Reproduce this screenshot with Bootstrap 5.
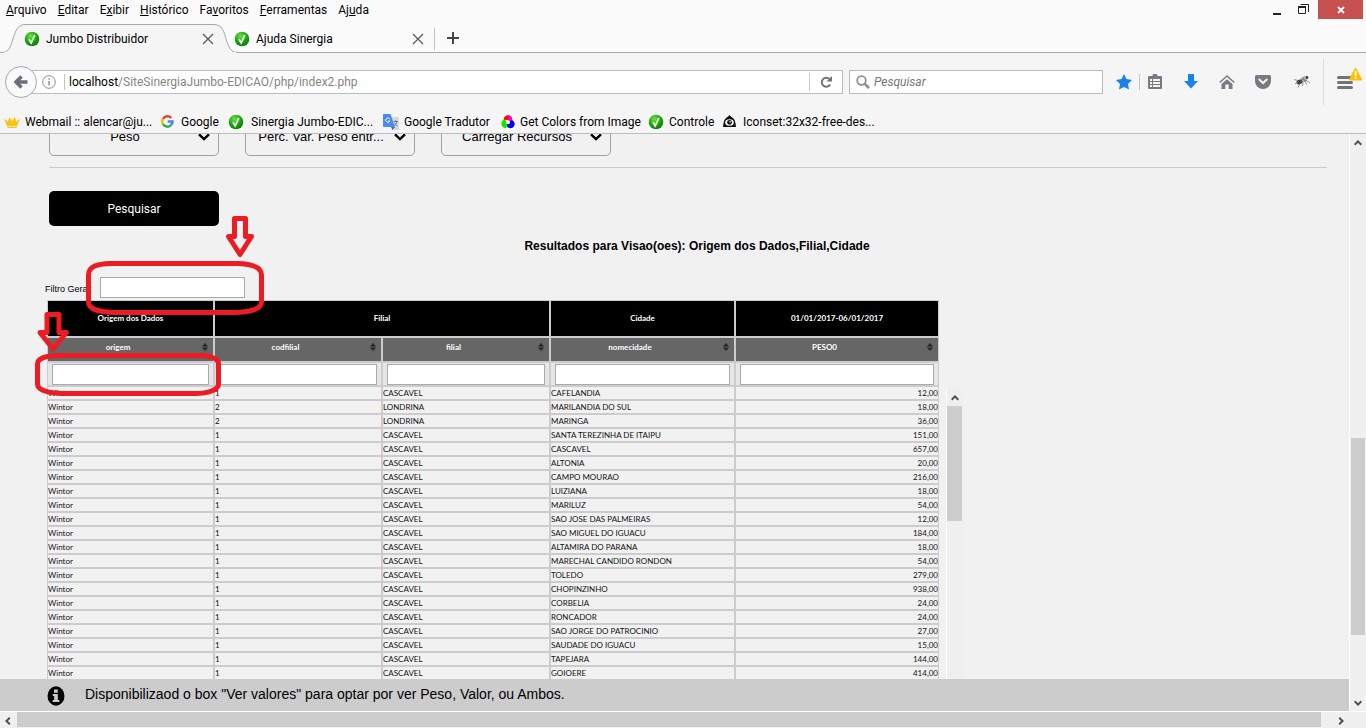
<!DOCTYPE html>
<html lang="pt-BR">
<head>
<meta charset="utf-8">
<meta name="viewport" content="width=device-width, initial-scale=1">
<title>Jumbo Distribuidor</title>
<link rel="stylesheet" href="https://cdn.jsdelivr.net/npm/bootstrap@5.3.0/dist/css/bootstrap.min.css">
<style>
  :root { --ui: Roboto, "Open Sans", sans-serif; --page: "Liberation Sans", Arial, sans-serif; --grid: Lato, "Open Sans", sans-serif; }
  body { font: 12px/16px var(--ui); color: #000; background: #f1f1f1; }
  a { color: inherit; text-decoration: none; }
  svg { display: block; flex: none; }
  button { font: inherit; color: inherit; border: 0; background: none; padding: 0; }

  .menubar { height: 23px; background: #fbfbfb; }
  .menubar nav { gap: 11px; padding: 2px 6px; }
  .win-btn { width: 26px; height: 19px; display: grid; place-items: center; }
  .win-close { width: 45px; margin: 0 3px 0 2px; background: #c75050; }

  .tabstrip { height: 30px; background: #fbfbfb; border-bottom: 1px solid #a0a8b2; }
  .tab-item { height: 31px; }
  .tab-one { width: 234px; padding: 0 20px 0 24px; }
  .tab-two { width: 201px; padding: 0 10px 0 0; border-right: 1px solid #c4c4c4; height: 22px; margin-top: 5px; }
  .tab-shape { left: 0; top: 0; }
  .tab-item span { flex: 1; margin-left: 6px; }

  .toolbar { height: 57px; background: #f5f5f5; padding-left: 5px; }
  .field { height: 24px; background: #fff; border: 1px solid #b4bcc6; }
  .field input { font: inherit; border: 0; outline: 0; background: none; min-width: 0; }
  .back-btn { width: 32px; height: 32px; border: 1px solid #a3aab3; border-radius: 50%; background: #fafafa; display: grid; place-items: center; z-index: 1; }
  .url-field { margin-left: -16px; padding-left: 20px; margin-right: 6px; }
  .url-path { color: #858585; }
  .reload { width: 33px; height: 18px; border-left: 1px solid #ccc; display: grid; place-items: center; }
  .search-field { width: 254px; padding-left: 6px; margin-right: 13px; }
  .search-field input::placeholder { color: #757575; font-style: italic; opacity: 1; }
  .vline { width: 1px; height: 16px; background: #c4c4c4; }
  .tool-btn { width: 36px; height: 24px; display: grid; place-items: center; }
  .star-btn { width: 16px; margin-right: 7px; }
  .tool-btn.narrow { width: 30px; margin-right: 3px; }
  .tool-btn.wide { width: 42px; }
  .menu-btn { width: 43px; height: 46px; border-left: 1px solid #dadada; padding-left: 13px; }
  .bookmarks { height: 24px; background: #f5f5f5; border-bottom: 1px solid #bcbcbc; padding-left: 4px; display: grid; grid-template-columns: 157px 67px 155px 118px 147px 75px auto; align-items: center; }
  .bookmarks a { display: flex; align-items: center; gap: 5px; white-space: nowrap; }
  .bookmarks a.wide-gap { gap: 7px; }

  .view { font-family: var(--page); padding: 0 22px 0 45px; overflow: hidden; min-height: 0; }
  .combos { margin-top: -14px; padding-left: 4px; gap: 26px; }
  .combo { width: 170px; height: 36px; border: 1px solid #9aa0a3; border-radius: 5px; background: #f1f1f1; overflow: hidden; }
  .combo select { appearance: none; width: 100%; height: 32px; border: 0; outline: 0; background: none; font: 13px/16px var(--page); color: #000; text-align: center; padding: 0 24px 0 6px; }
  .combo svg { right: 8px; top: 12px; pointer-events: none; }
  .rule { height: 1px; margin: 11px 0 23px 4px; border: 0; background: #ccc; opacity: 1; }
  .search-btn { width: 170px; height: 35px; margin-left: 4px; border-radius: 5px; background: #000; color: #fff; font: 12px/16px var(--ui); }
  .result-title { font: bold 12px/18px var(--page); margin: 11px -22px 22px 0; }
  .box-in { display: block; height: 21px; border: 1px solid #a9a9b0; border-radius: 0; background: #fff; padding: 0 4px; font: 10px/16px var(--page); }
  .general { font-size: 9px; gap: 7px; margin-bottom: 2px; }
  .general label { width: 48px; white-space: nowrap; padding-top: 2px; }
  .general .box-in { width: 145px; }

  .grid-table { width: 892px; table-layout: fixed; border-collapse: separate; border-spacing: 0; margin-left: 2px; font: 8px/12px var(--grid); flex: none; color: #111; }
  .grid-table th, .grid-table td { border: 1px solid #ccc; padding: 0; white-space: nowrap; overflow: hidden; }
  .grid-table th { color: #fff; text-align: center; font-weight: 700; }
  .row-top th { height: 37px; background: #000; padding-bottom: 2px; }
  .row-sub th { height: 25px; background: #666; padding-bottom: 5px; }
  .row-filter td { height: 24px; background: #e6e6e6; padding: 0 4px; }
  .row-filter .box-in { width: 100%; }
  .sort { width: 100%; display: flex; align-items: center; padding-right: 5px; font-weight: 700; }
  .sort span { flex: 1; padding-right: 14px; }
  .grid-table tbody td:last-child { text-align: right; }
  .inner-bar { width: 17px; margin: 89px 0 0 7px; border-left: 1px solid #fff; background: #efefef; }
  .inner-bar i { display: block; height: 115px; background: #cdcdcd; margin-right: 1px; }
  .sb-btn { width: 16px; height: 17px; display: grid; place-items: center; }
  .marks { left: 30px; top: 76px; pointer-events: none; }

  .notice { height: 32px; background: #ccc; font: 14px/18px var(--page); padding: 0 47px 2px; gap: 20px; }
  .notice svg { margin-top: 4px; }
  .vbar { width: 17px; background: #f0f0f0; border-left: 1px solid #fff; }
  .vbar i, .hbar i { background: #cdcdcd; }
  .vbar i { margin: 0 1px; }
  .hbar { height: 17px; background: #f0f0f0; border-top: 1px solid #fff; padding-right: 17px; }
  .hbar i { margin: 0 0 1px 1px; }
</style>
</head>
<body class="vh-100 d-flex flex-column overflow-hidden">
<svg width="0" height="0" class="position-absolute" aria-hidden="true">
  <defs>
    <radialGradient id="gr" cx=".4" cy=".3" r=".8"><stop offset="0" stop-color="#6fe04a"/><stop offset=".55" stop-color="#17a30c"/><stop offset="1" stop-color="#0a6d05"/></radialGradient>
    <symbol id="ok" viewBox="0 0 16 16"><path fill="#fff" d="M0 0h16v16H0z"/><circle cx="8" cy="8" r="7.3" fill="url(#gr)"/><path d="M5 8.3 7.2 12 10.8 4" fill="none" stroke="#fff" stroke-width="1.7"/></symbol>
    <symbol id="x" viewBox="0 0 12 12"><path d="M1 1l10 10M11 1L1 11" fill="none" stroke="#5a5a5a" stroke-width="1.3"/></symbol>
    <symbol id="up" viewBox="0 0 8 6"><path d="M.7 4.8 4 1.4l3.300 3.400" fill="none" stroke="#505050" stroke-width="2"/></symbol>
    <symbol id="chev" viewBox="0 0 12 8"><path d="M1 1.300 6 6l5-4.700" fill="none" stroke="#000" stroke-width="2.400"/></symbol>
    <symbol id="so" viewBox="0 0 6 8"><path d="M3 0l3 3.500H0zM3 8L0 4.500h6z" fill="#1f2a2e"/></symbol>
  </defs>
</svg>

<header>
  <div class="menubar d-flex justify-content-between align-items-start">
    <nav class="d-flex" aria-label="Menu">
      <a href="#"><u>A</u>rquivo</a><a href="#"><u>E</u>ditar</a><a href="#">E<u>x</u>ibir</a><a href="#"><u>H</u>istórico</a><a href="#">Fa<u>v</u>oritos</a><a href="#"><u>F</u>erramentas</a><a href="#">Aj<u>u</u>da</a>
    </nav>
    <div class="d-flex">
      <button class="win-btn" aria-label="Minimizar"><svg width="10" height="12"><path d="M1 9h8v2H1z" fill="#222"/></svg></button>
      <button class="win-btn" aria-label="Restaurar"><svg width="11" height="11"><path d="M2.500 .5h8V8M.5 3.500h7v6h-7z" fill="none" stroke="#222"/><path d="M0 2h8v2H0z" fill="#222"/></svg></button>
      <button class="win-btn win-close" aria-label="Fechar"><svg width="8" height="8"><path d="M1 1l6 6M7 1L1 7" stroke="#fff" stroke-width="1.800"/></svg></button>
    </div>
  </div>

  <div class="tabstrip d-flex position-relative">
    <svg class="tab-shape position-absolute" width="240" height="30"><path d="M0 29.500h2C16 29.500 10 1.500 25 1.500H214C230 1.500 222 29.500 238 29.500H240V30H0z" fill="#f5f5f5" stroke="#a0a8b2"/><path d="M4 30h232v-1H4z" fill="#f5f5f5"/></svg>
    <div class="tab-item tab-one d-flex align-items-center position-relative">
      <svg width="16" height="16"><use href="#ok"/></svg><span>Jumbo Distribuidor</span>
      <button aria-label="Fechar aba"><svg width="12" height="12"><use href="#x"/></svg></button>
    </div>
    <div class="tab-item tab-two d-flex align-items-center position-relative">
      <svg width="16" height="16"><use href="#ok"/></svg><span>Ajuda Sinergia</span>
      <button aria-label="Fechar aba"><svg width="12" height="12"><use href="#x"/></svg></button>
    </div>
    <button class="ps-2 ms-1" aria-label="Nova aba"><svg width="12" height="12"><path d="M6 0v12M0 6h12" stroke="#444" stroke-width="2"/></svg></button>
  </div>

  <div class="toolbar d-flex align-items-center">
    <button class="back-btn" aria-label="Voltar"><svg width="14" height="14"><path d="M13.500 7H3M7.500 1.500 2 7l5.500 5.500" fill="none" stroke="#6b6f75" stroke-width="3.400"/></svg></button>
    <div class="field url-field d-flex align-items-center flex-grow-1">
      <svg width="14" height="14"><circle cx="7" cy="7" r="6.300" fill="none" stroke="#8f8f8f"/><path d="M6.300 6h1.500v4.500H6.300zM6.300 3.300h1.500v1.500H6.300z" fill="#8f8f8f"/></svg>
      <span class="vline mx-1 ms-2"></span>
      <a href="#" class="flex-grow-1">localhost<span class="url-path">/SiteSinergiaJumbo-EDICAO/php/index2.php</span></a>
      <button class="reload" aria-label="Recarregar"><svg width="12" height="12"><path d="M9.500 3A4.500 4.500 0 1 0 10.200 8.500" fill="none" stroke="#757575" stroke-width="2"/><path d="M12 0v5.500H6.500z" fill="#757575"/></svg></button>
    </div>
    <div class="field search-field d-flex align-items-center">
      <svg width="14" height="14"><circle cx="5.500" cy="5.500" r="4.300" fill="none" stroke="#8f8f8f" stroke-width="1.800"/><path d="M8.500 8.500l4.500 4.500" stroke="#8f8f8f" stroke-width="2.600"/></svg>
      <input class="flex-grow-1 ms-1 ps-0" type="search" placeholder="Pesquisar" aria-label="Pesquisar">
    </div>
    <button class="tool-btn star-btn" aria-label="Favorito"><svg width="16" height="16"><path d="M8 0l2.500 5.100 5.500.8-4 4L13 15.500 8 13l-5 2.500 1-5.600-4-4 5.500-.8z" fill="#1a82e8"/></svg></button>
    <span class="vline"></span>
    <button class="tool-btn narrow" aria-label="Biblioteca"><svg width="14" height="15"><path d="M4.500 2a2.500 2.500 0 0 1 5 0H13q1 0 1 1v11q0 1-1 1H1q-1 0-1-1V3q0-1 1-1z" fill="#777a80"/><path d="M2 5h2v2H2zM5 5h7v2H5zM2 8h2v2H2zM5 8h7v2H5zM2 11h2v2H2zM5 11h7v2H5z" fill="#f5f5f5"/></svg></button>
    <button class="tool-btn" aria-label="Downloads"><svg width="14" height="15"><path d="M4 0h6v7h4l-7 7.500L0 7h4z" fill="#1a82e8"/></svg></button>
    <button class="tool-btn" aria-label="Início"><svg width="16" height="14"><path d="M.7 7.500 8 1l7.300 6.500" fill="none" stroke="#777a80" stroke-width="1.500"/><path d="M2.500 9 8 4.200 13.500 9V14H9.700V9.500H6.300V14H2.500z" fill="#777a80"/></svg></button>
    <button class="tool-btn" aria-label="Pocket"><svg width="16" height="14"><path d="M1.500 0h13Q16 0 16 1.500V6A8 8 0 0 1 0 6V1.500Q0 0 1.500 0z" fill="#777a80"/><path d="M4.300 4.500 8 8l3.700-3.500" fill="none" stroke="#f5f5f5" stroke-width="2" stroke-linecap="round"/></svg></button>
    <button class="tool-btn wide" aria-label="Firebug"><svg width="16" height="13"><path d="M6 4Q10 0 14 1.500L12.500 6 7 8z" fill="#b5b5b5"/><ellipse cx="5.500" cy="7" rx="3" ry="2.300" transform="rotate(-18 5.500 7)" fill="#444"/><path d="M0 4.500l4 1M1 9l3-2M4 12.500l2-4M8.500 11l.5-4M12.500 9.500l-1.500-4M16 8l-4-3M7 4l5 1.500M9 2l2 5" stroke="#777" fill="none" stroke-width=".8"/><circle cx="13" cy="2.500" r="1.400" fill="#444"/></svg></button>
    <button class="menu-btn" aria-label="Abrir menu"><svg width="26" height="32"><path d="M1.500 11.500h13M1.500 16.500h13M1.500 21.500h13" stroke="#6f7277" stroke-width="3" stroke-linecap="round"/><path d="M18.500 3l5.500 10.500H13z" fill="#ffbf00" stroke="#ffbf00" stroke-width="2" stroke-linejoin="round"/><path d="M17.700 5h1.800v5h-1.800zM17.700 11h1.800v2h-1.800z" fill="#fff"/></svg></button>
  </div>

  <nav class="bookmarks" aria-label="Favoritos">
    <a href="#"><svg width="16" height="14"><path d="M0 3.500l3.800 3.300L5.500 2l2.500 4L8 0l.4 6L11 2l1.300 4.800L16 3.500 13 11H3zM3.200 11.700h9.600V13H3.200z" fill="#f9c416"/></svg>Webmail :: alencar@ju...</a>
    <a href="#" class="wide-gap"><svg width="13" height="13" viewBox="0 0 13 13" fill="none" stroke-width="2.500"><path d="M2 3.800A5.200 5.200 0 0 1 10.300 3" stroke="#ea4335"/><path d="M2 3.800A5.200 5.200 0 0 0 2 9.200" stroke="#fbbc05"/><path d="M2 9.200A5.200 5.200 0 0 0 9.800 10.400" stroke="#34a853"/><path d="M6.700 6.600h4.800q0 2.400-1.700 3.800" stroke="#4285f4"/></svg>Google</a>
    <a href="#" class="wide-gap"><svg width="16" height="16"><use href="#ok"/></svg>Sinergia Jumbo-EDIC...</a>
    <a href="#"><svg width="16" height="16"><path d="M7 3h9v13H9z" fill="#d9d9d9"/><path d="M0 1q0-1 1-1h6.500l4.500 13H1q-1 0-1-1z" fill="#4889f4"/><path d="M8 13h4l-2.500 3z" fill="#3367d6"/><path d="M6.800 5A2.200 2.200 0 1 0 7 7H5" stroke="#fff" fill="none"/><path d="M10.500 7.500h4.500M12.700 6v1.500M14 7.500q-.5 3-3 4.500M11.500 8.500q1 2.500 3 3.500" stroke="#607988" fill="none" stroke-width=".9"/></svg>Google Tradutor</a>
    <a href="#"><svg width="14" height="14"><path fill="#fff" d="M0 0h14v14H0z"/><circle cx="7" cy="4.500" r="4.300" fill="red"/><circle cx="4.600" cy="9" r="4.300" fill="#ff0"/><circle cx="9.400" cy="9" r="4.300" fill="#00f"/><path d="M.5 7.500A4.300 4.300 0 0 1 3 4.500L7 7 5 13.200Q1 13 .5 9z" fill="#0e0"/><path d="M7 .2A4.300 4.300 0 0 1 11.200 5L7 7z" fill="#f0b"/><circle cx="7" cy="7.300" r="2" fill="#fff"/></svg>Get Colors from Image</a>
    <a href="#"><svg width="16" height="16"><use href="#ok"/></svg>Controle</a>
    <a href="#" class="wide-gap"><svg width="13" height="13"><path d="M6.500 0q1 1.300 3.500 3 2.500 2 2.500 5.300L13 12H0l.5-3.700Q.5 5 3 3 5.500 1.300 6.500 0z" fill="#111"/><ellipse cx="6.500" cy="7.500" rx="4.300" ry="3.300" fill="#f5f5f5"/><circle cx="6.500" cy="7.300" r="2.400" fill="#111"/><circle cx="7" cy="6.800" r=".8" fill="#fff"/></svg>Iconset:32x32-free-des...</a>
  </nav>
</header>

<div class="d-flex flex-grow-1" style="min-height:0">
  <div class="d-flex flex-column flex-grow-1" style="min-width:0">
    <main class="view flex-grow-1 position-relative">
      <div class="combos d-flex">
        <div class="combo position-relative"><select aria-label="Valores"><option>Peso</option></select><svg class="position-absolute" width="12" height="8"><use href="#chev"/></svg></div>
        <div class="combo position-relative"><select aria-label="Variação"><option>Perc. Var. Peso entr...</option></select><svg class="position-absolute" width="12" height="8"><use href="#chev"/></svg></div>
        <div class="combo position-relative"><select aria-label="Recursos"><option>Carregar Recursos</option></select><svg class="position-absolute" width="12" height="8"><use href="#chev"/></svg></div>
      </div>
      <hr class="rule">
      <button class="search-btn d-block">Pesquisar</button>
      <h1 class="result-title text-center">Resultados para Visao(oes): Origem dos Dados,Filial,Cidade</h1>
      <div class="general d-flex align-items-center">
        <label for="geral">Filtro Geral:</label><input id="geral" class="box-in" type="text">
      </div>
      <div class="d-flex">
        <table class="grid-table">
          <colgroup><col style="width:167px"><col style="width:168px"><col style="width:168px"><col style="width:185px"><col style="width:204px"></colgroup>
          <thead>
            <tr class="row-top"><th>Origem dos Dados</th><th colspan="2">Filial</th><th>Cidade</th><th>01/01/2017-06/01/2017</th></tr>
            <tr class="row-sub">
              <th><button class="sort"><span>origem</span><svg width="6" height="8"><use href="#so"/></svg></button></th>
              <th><button class="sort"><span>codfilial</span><svg width="6" height="8"><use href="#so"/></svg></button></th>
              <th><button class="sort"><span>filial</span><svg width="6" height="8"><use href="#so"/></svg></button></th>
              <th><button class="sort"><span>nomecidade</span><svg width="6" height="8"><use href="#so"/></svg></button></th>
              <th><button class="sort"><span>PESO0</span><svg width="6" height="8"><use href="#so"/></svg></button></th>
            </tr>
            <tr class="row-filter">
              <td><input class="box-in" type="text" aria-label="origem"></td><td><input class="box-in" type="text" aria-label="codfilial"></td><td><input class="box-in" type="text" aria-label="filial"></td><td><input class="box-in" type="text" aria-label="nomecidade"></td><td><input class="box-in" type="text" aria-label="PESO0"></td>
            </tr>
          </thead>
          <tbody>
            <tr><td>Wintor</td><td>1</td><td>CASCAVEL</td><td>CAFELANDIA</td><td>12,00</td></tr>
            <tr><td>Wintor</td><td>2</td><td>LONDRINA</td><td>MARILANDIA DO SUL</td><td>18,00</td></tr>
            <tr><td>Wintor</td><td>2</td><td>LONDRINA</td><td>MARINGA</td><td>36,00</td></tr>
            <tr><td>Wintor</td><td>1</td><td>CASCAVEL</td><td>SANTA TEREZINHA DE ITAIPU</td><td>151,00</td></tr>
            <tr><td>Wintor</td><td>1</td><td>CASCAVEL</td><td>CASCAVEL</td><td>657,00</td></tr>
            <tr><td>Wintor</td><td>1</td><td>CASCAVEL</td><td>ALTONIA</td><td>20,00</td></tr>
            <tr><td>Wintor</td><td>1</td><td>CASCAVEL</td><td>CAMPO MOURAO</td><td>216,00</td></tr>
            <tr><td>Wintor</td><td>1</td><td>CASCAVEL</td><td>LUIZIANA</td><td>18,00</td></tr>
            <tr><td>Wintor</td><td>1</td><td>CASCAVEL</td><td>MARILUZ</td><td>54,00</td></tr>
            <tr><td>Wintor</td><td>1</td><td>CASCAVEL</td><td>SAO JOSE DAS PALMEIRAS</td><td>12,00</td></tr>
            <tr><td>Wintor</td><td>1</td><td>CASCAVEL</td><td>SAO MIGUEL DO IGUACU</td><td>184,00</td></tr>
            <tr><td>Wintor</td><td>1</td><td>CASCAVEL</td><td>ALTAMIRA DO PARANA</td><td>18,00</td></tr>
            <tr><td>Wintor</td><td>1</td><td>CASCAVEL</td><td>MARECHAL CANDIDO RONDON</td><td>54,00</td></tr>
            <tr><td>Wintor</td><td>1</td><td>CASCAVEL</td><td>TOLEDO</td><td>279,00</td></tr>
            <tr><td>Wintor</td><td>1</td><td>CASCAVEL</td><td>CHOPINZINHO</td><td>938,00</td></tr>
            <tr><td>Wintor</td><td>1</td><td>CASCAVEL</td><td>CORBELIA</td><td>24,00</td></tr>
            <tr><td>Wintor</td><td>1</td><td>CASCAVEL</td><td>RONCADOR</td><td>24,00</td></tr>
            <tr><td>Wintor</td><td>1</td><td>CASCAVEL</td><td>SAO JORGE DO PATROCINIO</td><td>27,00</td></tr>
            <tr><td>Wintor</td><td>1</td><td>CASCAVEL</td><td>SAUDADE DO IGUACU</td><td>15,00</td></tr>
            <tr><td>Wintor</td><td>1</td><td>CASCAVEL</td><td>TAPEJARA</td><td>144,00</td></tr>
            <tr><td>Wintor</td><td>1</td><td>CASCAVEL</td><td>GOIOERE</td><td>414,00</td></tr>
          </tbody>
        </table>
        <div class="inner-bar"><span class="sb-btn"><svg width="8" height="6"><use href="#up"/></svg></span><i></i></div>
      </div>
      <!-- hand-drawn marks over the two filter boxes -->
      <svg class="marks position-absolute" width="240" height="190" viewBox="30 210 240 190" fill="none" stroke="#ed1c24" stroke-width="5" stroke-linejoin="round" aria-hidden="true">
        <path d="M88.500 275C88.500 266 98 264 110 263.500H238C252 264 261.500 267 261.500 275V302C261.500 309 250 312.500 234 312.500H116C100 312 88.500 310 88.500 302Z"/>
        <path d="M37.500 364C37.500 358 48 355.500 60 355.500H200C212 356 218.500 359 218.500 364V384C218.500 390 208 393.500 195 393.500H62C48 393 37.500 390 37.500 384Z"/>
        <path d="M234.500 218.500H245.500V236.500H251.500L240 254.500 228.500 236.500H234.500Z"/>
        <path d="M47 314.500H59V332.500H66.500L53 349 40 332.500H47Z"/>
      </svg>
    </main>
    <footer class="notice d-flex align-items-center">
      <svg width="18" height="20" viewBox="0 0 18 20"><ellipse cx="9" cy="10" rx="8.500" ry="9.700" fill="#000"/><path d="M7 3.500h3.800v3.200H7zM5.800 8h5v6h1.500v2H5.700v-2h1.500v-4H5.800z" fill="#ccc"/></svg>
      <span>Disponibilizaod o box "Ver valores" para optar por ver Peso, Valor, ou Ambos.</span>
    </footer>
  </div>
  <div class="vbar d-flex flex-column">
    <span class="sb-btn"><svg width="8" height="6"><use href="#up"/></svg></span>
    <b style="flex:287"></b><i style="flex:197"></i><b style="flex:59"></b>
    <span class="sb-btn"><svg width="8" height="6" transform="rotate(180)"><use href="#up"/></svg></span>
  </div>
</div>
<div class="hbar d-flex">
  <span class="sb-btn"><svg width="6" height="8"><path d="M4.800.7 1.400 4l3.400 3.300" fill="none" stroke="#505050" stroke-width="2"/></svg></span>
  <i class="flex-grow-1"></i><b style="width:12px"></b>
  <span class="sb-btn"><svg width="6" height="8"><path d="M1.200.7 4.600 4 1.200 7.300" fill="none" stroke="#505050" stroke-width="2"/></svg></span>
</div>
<script src="https://cdn.jsdelivr.net/npm/bootstrap@5.3.0/dist/js/bootstrap.bundle.min.js"></script>
</body>
</html>
